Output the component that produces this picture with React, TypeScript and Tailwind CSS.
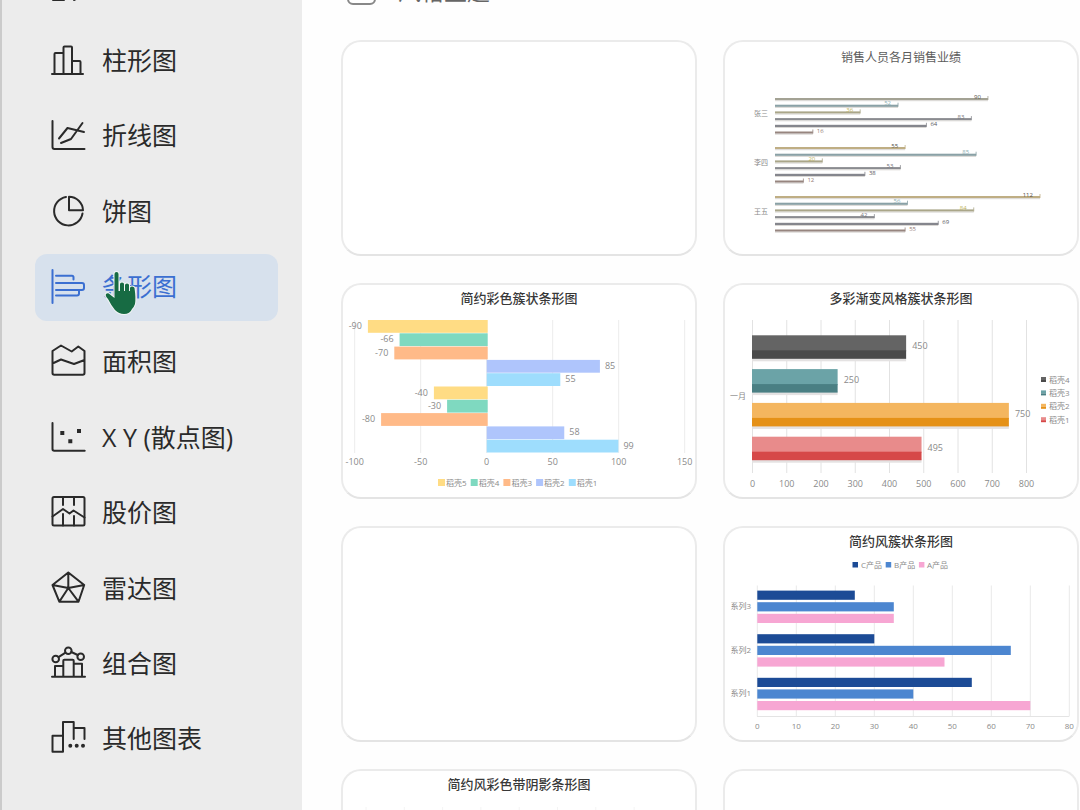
import type { ReactNode } from "react";

interface ChartType {
  label: string;
  icon: ReactNode;
}

interface Series {
  name: string;
  color: string;
}

const chartTypes: ChartType[] = [
  {
    label: "全部",
    icon: <path d="M2 31h11M23 28v3l2-1" />,
  },
  {
    label: "柱形图",
    icon: (
      <path d="M1 30h31M3.5 30V10q0-1 1-1h8M12.5 30V3.5q0-1 1-1h6.500q1 0 1 1V30M21 17h7.500q1 0 1 1v12" />
    ),
  },
  {
    label: "折线图",
    icon: (
      <path d="M1.5 2v26q0 2 2 2h30M8 19.500 16.500 9 33 13M10 24l10-4L31.500 4" />
    ),
  },
  {
    label: "饼图",
    icon: (
      <path d="M15 2A14.300 14.300 0 1 0 31.500 18.500M18 1.700v13.600h14A14 14 0 0 0 18 1.700Z" />
    ),
  },
  {
    label: "条形图",
    icon: (
      <path d="M1.500 0v33M5 5.700h16q1.500 0 1.500 1.500V9.500M5 13h26q2 0 2 2v3q0 2-2 2H5M28 20v3.500q0 2-2 2H5" />
    ),
  },
  {
    label: "面积图",
    icon: (
      <path d="M1.500 6 10 .5l10.700 6 6.600-5L33.500 6v22q0 1.700-1.700 1.700H3.200q-1.700 0-1.700-1.700ZM1.500 18.500l8.500-4L23 19l10.500-4" />
    ),
  },
  {
    label: "X Y (散点图)",
    icon: (
      <>
        <path d="M1.500 2v26q0 1.700 1.700 1.700h30.500" />
        <path
          d="M9.300 10h4v4h-4zM26 8h4v4h-4zM17.300 18.300h4v4h-4z"
          fill="currentColor"
          stroke="none"
        />
      </>
    ),
  },
  {
    label: "股价图",
    icon: (
      <>
        <rect x="1.5" y="1" width="32" height="28.5" rx="1.5" />
        <path d="M12 1v8M23 1v8M12 18v11.500M23 20v9.500M1.500 20.500 12 13l6.500 4.500 4-3 11 7" />
      </>
    ),
  },
  {
    label: "雷达图",
    icon: (
      <path d="M17.300.5 33.200 13l-5.700 16.700H8.300L1.500 13ZM17.300.5V16M1.500 13l15.800 3 15.900-3M8.300 29.700l9-13.700 10.200 13.700" />
    ),
  },
  {
    label: "组合图",
    icon: (
      <>
        <circle cx="4.700" cy="12" r="3.300" />
        <circle cx="17.300" cy="3.700" r="3.300" />
        <circle cx="29.700" cy="9.700" r="3.300" />
        <path d="m7.500 10.200 7-4.600M20.300 5l6.400 3M1 29.700h33M4 29.700V19h8.300M12.300 29.700v-16q0-1 1-1h8.400q1 0 1 1v16M22.700 16.700H31v13" />
      </>
    ),
  },
  {
    label: "其他图表",
    icon: (
      <>
        <path d="M12 13.700H1.500v16H12V0h10.700v17M22.700 6h10.800v11" />
        <path
          d="M17.300 23.700a2 2 0 1 0 4 0 2 2 0 1 0-4 0M23.700 23.700a2 2 0 1 0 4 0 2 2 0 1 0-4 0M30 23.700a2 2 0 1 0 4 0 2 2 0 1 0-4 0"
          fill="currentColor"
          stroke="none"
        />
      </>
    ),
  },
];

function HandPointer() {
  return (
    <svg
      className="absolute left-[67px] top-4 w-9 h-12 pointer-events-none"
      viewBox="-1 -1 36 48"
      aria-hidden="true"
    >
      <path
        d="M11.500 27V3q0-2 2-2t2 2v17h1.500v-7q0-1.500 2-1.500t2 1.500v7h1v-6q0-1.500 2-1.500t2 1.500v6h1v-3q0-1.500 2-1.500t2.500 1.500q1.500 10 .5 16-1 3-3 5-2 5-8 5-5 0-9-4-4-5-7-11-3-3-2-5 2-1.500 4 .500Z"
        fill="#176b43"
        stroke="#f1f5f4"
        strokeWidth="2"
        strokeLinejoin="round"
        paintOrder="stroke"
      />
    </svg>
  );
}

function ChartFrame({ label, children }: { label: string; children: ReactNode }) {
  return (
    <svg
      className="block w-full"
      viewBox="2 30 352 184"
      role="img"
      aria-label={label}
      fontFamily='"Open Sans", "Noto Sans CJK SC", sans-serif'
      fontSize="9"
      fill="#8a8a8a"
    >
      {children}
    </svg>
  );
}

const salesColors = [
  "#a3a294",
  "#8aa1a6",
  "#aaa689",
  "#8a8b90",
  "#85868d",
  "#97857f",
];
const salesLabelColors = [
  "#55524a",
  "#8fb0b4",
  "#c0b45c",
  "#77787d",
  "#55565c",
  "#967d75",
];
const sales = [
  { name: "张三", top: 59, values: [90, 52, 36, 83, 64, 16] },
  { name: "李四", top: 108, values: [55, 85, 20, 53, 38, 12] },
  { name: "王五", top: 157, values: [112, 56, 84, 42, 69, 55] },
];

function SalesChart() {
  return (
    <ChartFrame label="销售人员各月销售业绩">
      {sales.map((person, group) => (
        <g key={person.name}>
          <text x="45" y={person.top + 17} fontSize="7" textAnchor="end">
            {person.name}
          </text>
          {person.values.map((value, i) => {
            const y = person.top + i * 6.7;
            const end = 52 + value * 2.366;
            const inside = i < 4;
            const color = group > 0 && i === 0 ? "#bfae84" : salesColors[i];
            return (
              <g key={i}>
                <rect x="52" y={y - 1} width={end - 52} height="2.2" fill={color} />
                <path
                  d={`M52 ${y + 1.7}H${end}`}
                  stroke="#d9d7d4"
                  strokeWidth="1"
                />
                <path
                  d={`M${end} ${y + 1}v-4`}
                  stroke={color}
                  strokeWidth="0.8"
                />
                <text
                  x={inside ? end - 7 : end + 4}
                  y={inside ? y - 0.5 : y + 0.5}
                  fontSize="6"
                  textAnchor={inside ? "end" : "start"}
                  fill={salesLabelColors[i]}
                >
                  {value}
                </text>
              </g>
            );
          })}
        </g>
      ))}
    </ChartFrame>
  );
}

const colorful: Series[] = [
  { name: "稻壳5", color: "#ffdc84" },
  { name: "稻壳4", color: "#7fd9c0" },
  { name: "稻壳3", color: "#ffba88" },
  { name: "稻壳2", color: "#afc5fc" },
  { name: "稻壳1", color: "#9eddfd" },
];
const colorfulValues = [-90, -66, -70, 85, 55, -40, -30, -80, 58, 99];

function ColorfulChart() {
  const scale = (v: number) => 145.7 + v * 1.32;
  return (
    <ChartFrame label="简约彩色簇状条形图">
      {[-100, -50, 0, 50, 100, 150].map((tick) => (
        <g key={tick}>
          <path d={`M${scale(tick)} 37V170`} stroke="#ececec" />
          <text x={scale(tick)} y="182" textAnchor="middle">
            {tick}
          </text>
        </g>
      ))}
      {colorfulValues.map((value, i) => {
        const y = 37 + i * 13.3;
        return (
          <g key={i}>
            <rect
              x={Math.min(scale(value), scale(0))}
              y={y}
              width={Math.abs(value) * 1.32 + 1}
              height="12.8"
              fill={colorful[i % 5].color}
            />
            <text
              x={value < 0 ? scale(value) - 6 : scale(value) + 6}
              y={y + 9}
              textAnchor={value < 0 ? "end" : "start"}
            >
              {value}
            </text>
          </g>
        );
      })}
      {colorful.map((series, i) => (
        <g key={series.name}>
          <rect
            x={97 + i * 32.7}
            y="196"
            width="7"
            height="7"
            fill={series.color}
          />
          <text x={105 + i * 32.7} y="203" fontSize="8">
            {series.name}
          </text>
        </g>
      ))}
    </ChartFrame>
  );
}

const gradientBars = [
  { name: "稻壳4", value: 450, light: "#646464", dark: "#4a4a4a" },
  { name: "稻壳3", value: 250, light: "#6ba3a7", dark: "#4a7f83" },
  { name: "稻壳2", value: 750, light: "#f4b65f", dark: "#e59117" },
  { name: "稻壳1", value: 495, light: "#e88b8b", dark: "#d64848" },
];

function GradientChart() {
  return (
    <ChartFrame label="多彩渐变风格簇状条形图">
      {[0, 100, 200, 300, 400, 500, 600, 700, 800].map((tick) => (
        <g key={tick}>
          <path d={`M${29.5 + tick * 0.3425} 37V190`} stroke="#e2e2e2" />
          <text x={29.5 + tick * 0.3425} y="204" textAnchor="middle">
            {tick}
          </text>
        </g>
      ))}
      <text x="23" y="116" fontSize="8" textAnchor="end">
        一月
      </text>
      {gradientBars.map((bar, i) => {
        const y = 52.3 + i * 33.8;
        const width = bar.value * 0.3425;
        return (
          <g key={bar.name}>
            <rect x="29" y={y + 22} width={width} height="4" fill="#e4e2e2" />
            <rect x="29" y={y} width={width} height="16" fill={bar.light} />
            <rect x="29" y={y + 15} width={width} height="8.5" fill={bar.dark} />
            <text x={35 + width} y={y + 14}>
              {bar.value}
            </text>
            <rect
              x="318"
              y={94 + i * 13.4}
              width="5"
              height="3"
              fill={bar.light}
            />
            <rect
              x="318"
              y={97 + i * 13.4}
              width="5"
              height="2"
              fill={bar.dark}
            />
            <text x="326" y={99.5 + i * 13.4} fontSize="8">
              {bar.name}
            </text>
          </g>
        );
      })}
    </ChartFrame>
  );
}

const products: Series[] = [
  { name: "C产品", color: "#1c4b96" },
  { name: "B产品", color: "#4c86d0" },
  { name: "A产品", color: "#f7a6d3" },
];
const productRows = [
  { name: "系列3", values: [25, 35, 35] },
  { name: "系列2", values: [30, 65, 48] },
  { name: "系列1", values: [55, 40, 70] },
];

function ProductChart() {
  return (
    <ChartFrame label="简约风簇状条形图">
      {products.map((product, i) => (
        <g key={product.name}>
          <rect
            x={129.5 + i * 33.2}
            y="36"
            width="5.5"
            height="5.5"
            fill={product.color}
          />
          <text x={138 + i * 33} y="42" fontSize="8">
            {product.name}
          </text>
        </g>
      ))}
      {[0, 10, 20, 30, 40, 50, 60, 70, 80].map((tick) => (
        <g key={tick}>
          <path d={`M${34.3 + tick * 3.9} 59.500V190.500`} stroke="#e9e9e9" />
          <text
            x={34.3 + tick * 3.9}
            y="203"
            fontSize="8"
            textAnchor="middle"
          >
            {tick}
          </text>
        </g>
      ))}
      <path d="M34 190.500H346" stroke="#e4e4e4" />
      {productRows.map((row, group) => (
        <g key={row.name}>
          <text x="28" y={83 + group * 43.7} fontSize="8" textAnchor="end">
            {row.name}
          </text>
          {row.values.map((value, i) => (
            <rect
              key={i}
              x="34.3"
              y={64.6 + group * 43.6 + i * 11.6}
              width={value * 3.9}
              height="9.2"
              fill={products[i].color}
            />
          ))}
        </g>
      ))}
    </ChartFrame>
  );
}

function ShadowChart() {
  return (
    <ChartFrame label="简约风彩色带阴影条形图">
      {[0, 1, 2, 3, 4, 5, 6, 7].map((tick) => (
        <path key={tick} d={`M${25 + tick * 38.3} 38V190`} stroke="#f4f4f4" />
      ))}
    </ChartFrame>
  );
}

function TemplateCard({
  title,
  light,
  children,
}: {
  title?: string;
  light?: boolean;
  children?: ReactNode;
}) {
  return (
    <article className="h-[216px] rounded-[20px] border-2 border-[#ebebeb] border-b-[#e4e4e4] bg-white overflow-hidden">
      {title && (
        <h3
          className={
            light
              ? "h-7 text-center text-[12px] leading-8 font-normal text-[#5c5c5c]"
              : "h-7 text-center text-[13px] leading-[26px] font-medium text-[#383838]"
          }
        >
          {title}
        </h3>
      )}
      {children}
    </article>
  );
}

export default function App() {
  const active = "条形图";

  return (
    <div className="flex h-screen overflow-hidden bg-[#fefefe] font-['Open_Sans','Noto_Sans_CJK_SC',sans-serif]">
      <aside className="flex w-[302px] shrink-0 flex-col border-l-2 border-[#cbcbcb] bg-[#ececec]">
        <nav className="-mt-12 flex flex-1 flex-col justify-between pr-6 pb-[37px] pl-[33px]">
          {chartTypes.map(({ label, icon }) => (
            <button
              key={label}
              type="button"
              className={
                label === active
                  ? "relative flex h-[67px] items-center gap-[17px] rounded-xl bg-[#d7e1ed] px-4 text-[#3b6fd1]"
                  : "relative flex h-[67px] items-center gap-[17px] rounded-xl px-4 text-[#2a2a2a]"
              }
            >
              <svg
                className="h-[34px] w-[34px] shrink-0 overflow-visible"
                viewBox="0 0 34 34"
                fill="none"
                stroke="currentColor"
                strokeWidth="2"
                strokeLinecap="round"
                strokeLinejoin="round"
                aria-hidden="true"
              >
                {icon}
              </svg>
              <span className="whitespace-nowrap pb-0.5 text-[25px] font-normal leading-8">
                {label}
              </span>
              {label === active && <HandPointer />}
            </button>
          ))}
        </nav>
      </aside>

      <main className="-mt-[25px] min-w-0 flex-1 pl-[39px] pr-px">
        <label className="flex h-8 items-center gap-[22px] pl-1.5 text-[23px] leading-8 text-[#666666]">
          <input
            type="checkbox"
            className="h-7 w-[29px] appearance-none rounded-md border-2 border-[#888888] bg-white"
          />
          风格主题
        </label>

        <div className="mt-[33px] grid grid-cols-2 gap-x-[26px] gap-y-[27px]">
          <TemplateCard />
          <TemplateCard title="销售人员各月销售业绩" light>
            <SalesChart />
          </TemplateCard>
          <TemplateCard title="简约彩色簇状条形图">
            <ColorfulChart />
          </TemplateCard>
          <TemplateCard title="多彩渐变风格簇状条形图">
            <GradientChart />
          </TemplateCard>
          <TemplateCard />
          <TemplateCard title="简约风簇状条形图">
            <ProductChart />
          </TemplateCard>
          <TemplateCard title="简约风彩色带阴影条形图">
            <ShadowChart />
          </TemplateCard>
          <TemplateCard />
        </div>
      </main>
    </div>
  );
}
